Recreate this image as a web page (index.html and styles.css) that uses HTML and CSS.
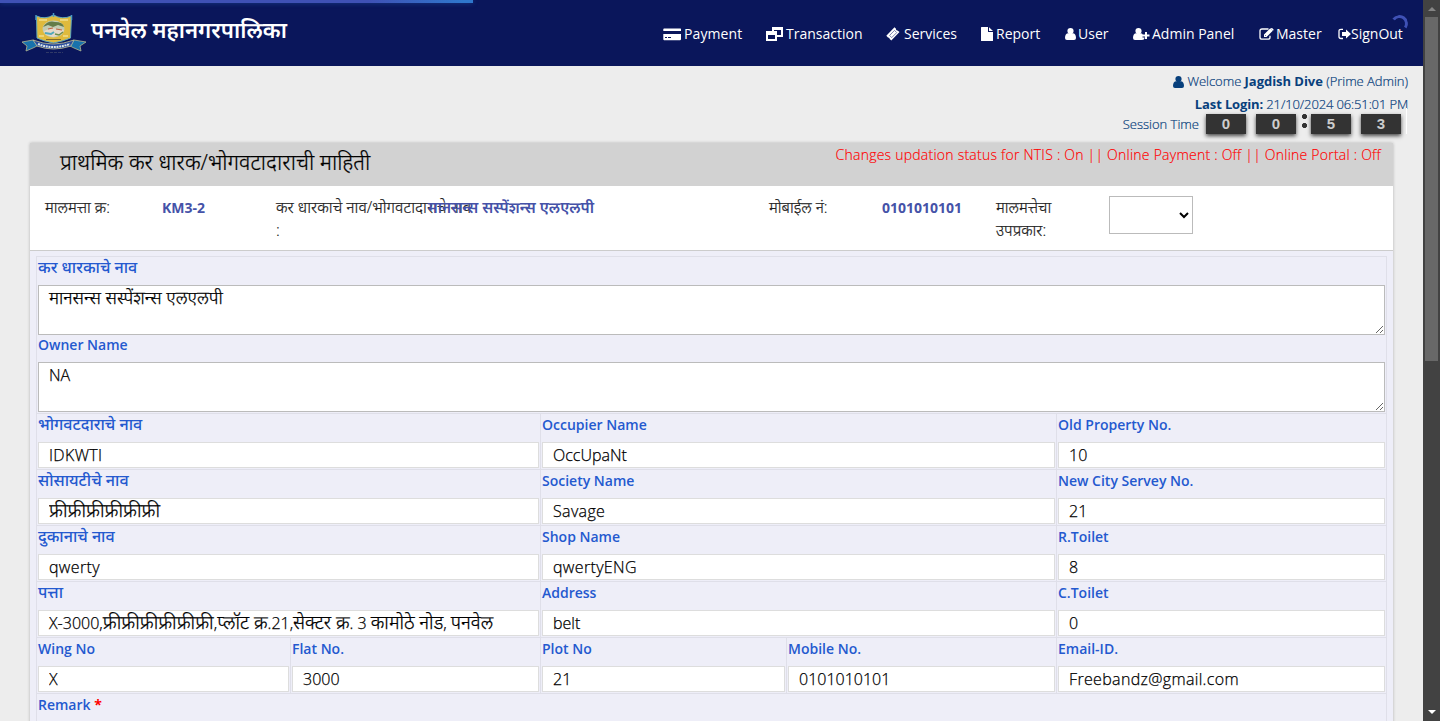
FILE: index.html
```html
<!DOCTYPE html>
<html lang="mr">
<head>
<meta charset="utf-8">
<title>पनवेल महानगरपालिका</title>
<link rel="stylesheet" href="styles.css">
</head>
<body>
<div class="page">
  <header class="topbar">
    <div class="progress"></div>
    <svg class="crest" width="66" height="42" viewBox="0 0 66 42">
      <path d="M15.500 3 Q24 7 32.500 2 Q41 7 50.500 3 L49.500 25 Q43 28 32.500 30 Q22 28 16 25Z" fill="#dfba3d" stroke="#60a9bd" stroke-width="1"/>
      <path d="M32.500 0v4M15 2v5M50.500 2v5" stroke="#4a9ac0" stroke-width="1.500"/>
      <path d="M18 7h8M39 7h8M18 23h5M42 23h5" stroke="#ecd57a" stroke-width="2"/>
      <ellipse cx="32.500" cy="16" rx="11" ry="8.500" fill="#c3ccb4"/>
      <path d="M22 14Q27 7 34 9Q42 9 43 14L37 12L32 14L27 12Z" fill="#637c48"/>
      <path d="M23 18l8-3 12 2-3 5-8 2-7-2z" fill="#e6d9c9"/>
      <path d="M24 20l6 1 3-2" fill="none" stroke="#50a8bd" stroke-width="2"/>
      <path d="M34 21l4 1 4-3" fill="none" stroke="#6d8f4b" stroke-width="1.500"/>
      <path d="M27 16l5-1M35 16l6 1" stroke="#bf6541" stroke-width="1.200"/>
      <path d="M25 26.500h15" stroke="#80682b"/>
      <path d="M1 29L12 27L18 32L12 35L5 38L6 33ZM65 29L53 27L47 32L53 35L60 38L59 33Z" fill="#1872ac" stroke="#b5b68d" stroke-width=".8"/>
      <path d="M12 27Q32 35 53 27L50 33Q32 39 16 33Z" fill="#284b9d" stroke="#c5c496" stroke-width=".8"/>
      <path d="M17 31Q32 37 49 31" fill="none" stroke="#dce5e7" stroke-width="2" stroke-dasharray="2 .7"/>
      <path d="M25 39.500h17" stroke="#303967" stroke-dasharray="3 1"/>
    </svg>
    <div class="brand">पनवेल महानगरपालिका</div>
    <nav class="nav">
      <a class="n1"><svg width="19" height="13" viewBox="0 0 19 13"><path fill="#fff" fill-rule="evenodd" d="M1 .5h16.500l.5.500v2H.3V1zM.3 6H18v5.500l-.8.700H1l-.7-.7zM2 9v1h2V9zm3 0v1h3V9z"/></svg><span>Payment</span></a>
      <a class="n2"><svg width="17" height="15" viewBox="0 0 17 15"><path fill="#fff" fill-rule="evenodd" d="M6 0h11v10h-6v4H0V4h6zm2 3v1h3v4h4V3zM2 8v4h7V8z"/></svg><span>Transaction</span></a>
      <a class="n3"><svg width="14" height="14" viewBox="0 0 14 14"><path fill="#fff" d="M8.500.3l1.500 1.500q-.3 1.800 1.500 1.600L13.500 5 5.300 13.500 3.700 12q0-1.700-1.700-1.600L.3 8.700z"/><path d="M3.600 8.400l4.900-5 2.200 2.200-5 5z" fill="none" stroke="#5b649a" stroke-width=".8"/></svg><span>Services</span></a>
      <a class="n4"><svg width="13" height="14" viewBox="0 0 13 14"><path fill="#fff" d="M0 .6Q0 0 .6 0H7v4.500q0 .6.600.6H12v8.300q0 .6-.6.600H.6Q0 14 0 13.400zM8 .2L12 4.100H8z"/></svg><span>Report</span></a>
      <a class="n5"><svg width="11" height="12" viewBox="0 0 11 12"><path fill="#fff" d="M5.500 0a3 3 0 0 1 0 6.200A3 3 0 0 1 5.500 0M2.800 5.200Q5.500 7.500 8.200 5.200 11 6 11 10q0 2-2 2H2q-2 0-2-2 0-4 2.800-4.800"/></svg><span>User</span></a>
      <a class="n6"><svg width="17" height="12" viewBox="0 0 17 12"><path fill="#fff" d="M5.500 0a3 3 0 0 1 0 6.200A3 3 0 0 1 5.500 0M2.800 5.200Q5.500 7.500 8.200 5.200L9.500 6v3.500h2.200q-.2 2.500-2.700 2.500H2q-2 0-2-2 0-4 2.800-4.800M12 4h2v2.500h2.500v2H14V11h-2V8.500H9.500v-2H12z"/></svg><span>Admin Panel</span></a>
      <a class="n7"><svg width="15" height="12" viewBox="0 0 15 12"><path d="M9.500 1H3Q1 1 1 3v6.200q0 2 2 2h6q2 0 2-2V7.800" fill="none" stroke="#fff" stroke-width="1.300"/><path fill="#fff" d="M5 6.500L11.300.200l2.500 2.500L7.500 9H5zM6 7v1.100h1.100z"/><path d="M12.300.200q.5-.5 1 0l1.100 1.100q.4.500 0 1l-.5.500-2.200-2.100z" fill="#fff"/></svg><span>Master</span></a>
      <a class="n8"><svg width="13" height="12" viewBox="0 0 13 12"><path d="M5 1.400H3Q1 1.400 1 3.200v5.600q0 1.700 2 1.700h2" fill="none" stroke="#fff" stroke-width="1.300"/><path fill="#fff" d="M4 4h4V1.400L13 6l-5 4.600V8H4z"/></svg><span>SignOut</span></a>
    </nav>
    <div class="spinner"></div>
  </header>

  <section class="session">
    <div class="welcome"><svg width="11" height="12" viewBox="0 0 11 12"><path fill="#08407c" d="M5.500 0a3 3 0 0 1 0 6.200A3 3 0 0 1 5.500 0M2.800 5.200Q5.500 7.500 8.200 5.200 11 6 11 10q0 2-2 2H2q-2 0-2-2 0-4 2.800-4.800"/></svg><span>Welcome <b>Jagdish Dive</b> (Prime Admin)</span></div>
    <div class="login"><b>Last Login:</b> 21/10/2024 06:51:01 PM</div>
    <div class="timer"><span class="timer-label">Session Time</span><b>0</b><b>0</b><i class="colon"></i><b>5</b><b>3</b><i class="rule"></i></div>
  </section>

  <main class="card">
    <div class="card-head">
      <h1>प्राथमिक कर धारक/भोगवटादाराची माहिती</h1>
      <div class="status">Changes updation status for NTIS : On || Online Payment : Off || Online Portal : Off</div>
    </div>
    <div class="summary">
      <div class="key">मालमत्ता क्र:</div><div class="val">KM3-2</div>
      <div class="key wide">कर धारकाचे नाव/भोगवटादाराचे नाव<br>:</div><div class="val hi">मानसन्स सस्पेंशन्स एलएलपी</div>
      <div class="key">मोबाईल नं:</div><div class="val">0101010101</div>
      <div class="key">मालमत्तेचा<br>उपप्रकार:</div><div><select class="subtype"><option></option></select></div>
    </div>
    <div class="form">
      <div class="cell span5 owner">
        <label class="hi">कर धारकाचे नाव</label><textarea class="hi">मानसन्स सस्पेंशन्स एलएलपी</textarea>
        <label class="second">Owner Name</label><textarea>NA</textarea>
      </div>
      <div class="cell span2"><label class="hi">भोगवटदाराचे नाव</label><input class="spaced" value="IDKWTI"></div>
      <div class="cell span2"><label>Occupier Name</label><input value="OccUpaNt"></div>
      <div class="cell"><label>Old Property No.</label><input value="10"></div>
      <div class="cell span2"><label class="hi">सोसायटीचे नाव</label><input class="hi conjunct" value="फ्रीफ्रीफ्रीफ्रीफ्रीफ्री"></div>
      <div class="cell span2"><label>Society Name</label><input class="spaced" value="Savage"></div>
      <div class="cell"><label>New City Servey No.</label><input value="21"></div>
      <div class="cell span2"><label class="hi">दुकानाचे नाव</label><input class="spaced" value="qwerty"></div>
      <div class="cell span2"><label>Shop Name</label><input class="spaced" value="qwertyENG"></div>
      <div class="cell"><label>R.Toilet</label><input value="8"></div>
      <div class="cell span2"><label class="hi">पत्ता</label><div class="field">X-3000,<span class="conjunct">फ्रीफ्रीफ्रीफ्रीफ्रीफ्री</span>,<span>प्लॉट क्र</span>.21,<span>सेक्टर क्र</span>. 3 <span>कामोठे नोड</span>, <span>पनवेल</span></div></div>
      <div class="cell span2"><label>Address</label><input value="belt"></div>
      <div class="cell"><label>C.Toilet</label><input value="0"></div>
      <div class="cell"><label>Wing No</label><input value="X"></div>
      <div class="cell"><label>Flat No.</label><input value="3000"></div>
      <div class="cell"><label>Plot No</label><input value="21"></div>
      <div class="cell"><label>Mobile No.</label><input value="0101010101"></div>
      <div class="cell"><label>Email-ID.</label><input class="spaced" value="Freebandz@gmail.com"></div>
      <div class="cell span5 remark"><label>Remark <b>*</b></label></div>
    </div>
  </main>
</div>
<div class="scrollbar"><i class="up"></i><i class="thumb"></i><i class="down"></i></div>
</body>
</html>
```
FILE: styles.css
```css
* { box-sizing: border-box; }
body {
  margin: 0;
  height: 721px;
  display: flex;
  overflow: hidden;
  background: #ededed;
  font-family: "Open Sans", "Noto Sans Devanagari", "Noto Sans", sans-serif;
}
.page { width: 1423px; height: 721px; overflow: hidden; }

.topbar {
  position: relative;
  height: 66px;
  display: flex;
  align-items: flex-start;
  padding-left: 21px;
  background: #0a165b;
}
.progress {
  position: absolute;
  left: 0;
  top: 0;
  width: 473px;
  height: 3px;
  background: linear-gradient(90deg, #3f51b5 78%, #2f77cc 98%);
  box-shadow: 0 0 5px rgba(41, 110, 200, .5);
}
.crest { margin-top: 13px; flex: none; }
.brand {
  width: 500px;
  margin: 14px 0 0 4px;
  color: #fff;
  font-size: 22.2px;
  line-height: 32px;
  font-weight: 600;
  white-space: nowrap;
}
.nav { display: flex; margin-top: 22px; color: #fff; font-size: 14px; line-height: 24px; }
.nav a { display: flex; align-items: center; gap: 2px; flex: none; white-space: nowrap; }
.nav svg { flex: none; }
.nav .n1 { width: 103px; margin-left: 72px; letter-spacing: .1px; }
.nav .n2 { width: 120px; gap: 3px; }
.nav .n3 { width: 95px; gap: 4px; }
.n4 { width: 84px; }
.n5 { width: 68px; }
.n6 { width: 126px; }
.n7 { width: 79px; }
.nav .n8 { gap: 0; }
.spinner {
  position: absolute;
  left: 1391px;
  top: 15px;
  width: 17px;
  height: 17px;
  border: 3px solid transparent;
  border-top-color: #3f51b5;
  border-right-color: #3f51b5;
  border-radius: 50%;
  transform: rotate(-10deg);
}

.session {
  height: 77px;
  display: flex;
  flex-direction: column;
  align-items: flex-end;
  padding: 4px 15px 0 0;
  color: #08407c;
  font-size: 13px;
  line-height: 23px;
  font-weight: 300;
  -webkit-text-stroke: .2px;
  white-space: nowrap;
}
.session b { font-weight: 700; -webkit-text-stroke: 0; }
.welcome { display: flex; align-items: center; gap: 3px; letter-spacing: -.04px; }
.login { letter-spacing: -.13px; }
.timer { display: flex; height: 20px; margin-top: -2px; }
.timer-label { line-height: 20px; margin-right: 7px; }
.timer b {
  width: 40px;
  height: 20px;
  margin-right: 10px;
  background: #333;
  color: #ccc;
  font: 700 15px/20px "Liberation Sans", sans-serif;
  text-align: center;
  box-shadow: 0 2px 4px rgba(0, 0, 0, .7);
}
.timer .colon {
  width: 5px;
  height: 18px;
  margin: -2px 4px 0 -4px;
  background: radial-gradient(circle, #333 2.2px, transparent 2.9px) 0 0 / 5px 9px;
}
.timer b:nth-last-child(2) { margin-right: 5px; }
.rule { width: 1px; height: 26px; margin: -6px 1px 0 0; background: #fff; }

.card { width: 1363px; height: 700px; margin-left: 30px; background: #eeeef8; box-shadow: 0 0 3px rgba(0, 0, 0, .24); }
.card-head { display: flex; justify-content: space-between; height: 43px; padding: 0 12px 0 30px; background: #d2d2d2; }
h1 {
  margin: 5px 0 0;
  color: #000;
  font-size: 21.6px;
  line-height: 28px;
  font-weight: 300;
  -webkit-text-stroke: .2px;
  white-space: nowrap;
}
.status {
  color: #f00;
  font-size: 14px;
  line-height: 24px;
  font-weight: 300;
  letter-spacing: .235px;
  -webkit-text-stroke: .15px;
  white-space: nowrap;
}
.summary {
  display: grid;
  grid-template-columns: 117px 114px 152px 341px 113px 114px 113px 1fr;
  height: 65px;
  padding: 10px 0 0 15px;
  border-bottom: 1px solid #ccc;
  background: #fff;
  color: #212121;
  font-size: 14px;
  line-height: 23px;
  font-weight: 300;
  white-space: nowrap;
}
.key { font-size: 15.6px; -webkit-text-stroke: .2px; }
.key.wide { font-size: 15.9px; }
.val { color: #4552a8; font-weight: 700; }
.val.hi { font-size: 15.4px; font-weight: 600; }
.subtype { width: 84px; height: 38px; border: 1px solid #bbb; background: #fff; font: 16px "Open Sans", sans-serif; }

.form {
  display: grid;
  grid-template-columns: 254px 250px 246px 270px 330px;
  width: 1351px;
  margin: 5px 0 0 6px;
  border-right: 1px solid #dfdfe9;
}
.cell { min-width: 0; border-top: 1px solid #dfdfe9; border-left: 1px solid #dfdfe9; padding: 0 1px 1px; }
.span2 { grid-column: span 2; }
.span5 { grid-column: 1 / -1; }
.cell label {
  display: block;
  height: 28px;
  color: #2459cf;
  font-size: 14px;
  line-height: 22px;
  font-weight: 600;
  white-space: nowrap;
}
.cell label.hi { font-size: 16.1px; line-height: 20px; font-weight: 550; }
.cell .second { height: 27px; line-height: 20px; }
.cell input, .cell textarea, .field {
  display: block;
  width: 100%;
  height: 26px;
  margin: 0;
  padding: 0 10px;
  border: 1px solid #ddd;
  border-radius: 0;
  background: #fff;
  color: #000;
  font: 300 16px/24px "Open Sans", "Noto Sans Devanagari", "Noto Sans", sans-serif;
  -webkit-text-stroke: .25px;
  white-space: nowrap;
}
.cell textarea { height: 50px; border-color: #bbb; overflow: hidden; resize: vertical; }
.cell input.spaced { letter-spacing: .34px; }
.cell input.hi, .cell textarea.hi { font-size: 17.8px; }
.cell textarea.hi { line-height: 22px; }
.field span { font-size: 18.7px; line-height: 1; }
.cell input.conjunct, .field .conjunct { font-size: 18.9px; }
.remark { height: 80px; }
.remark b { color: #f00; font-weight: 700; }

.scrollbar { width: 17px; height: 721px; display: flex; flex-direction: column; align-items: center; background: #424242; }
.up { border: 4px solid transparent; border-top: 0; border-bottom: 4px solid #858585; margin-top: 7px; }
.thumb { width: 13px; height: 344px; margin-top: 6px; background: #686868; }
.down { margin: auto 0 7px; border: 4px solid transparent; border-bottom: 0; border-top: 4px solid #fff; }
```
